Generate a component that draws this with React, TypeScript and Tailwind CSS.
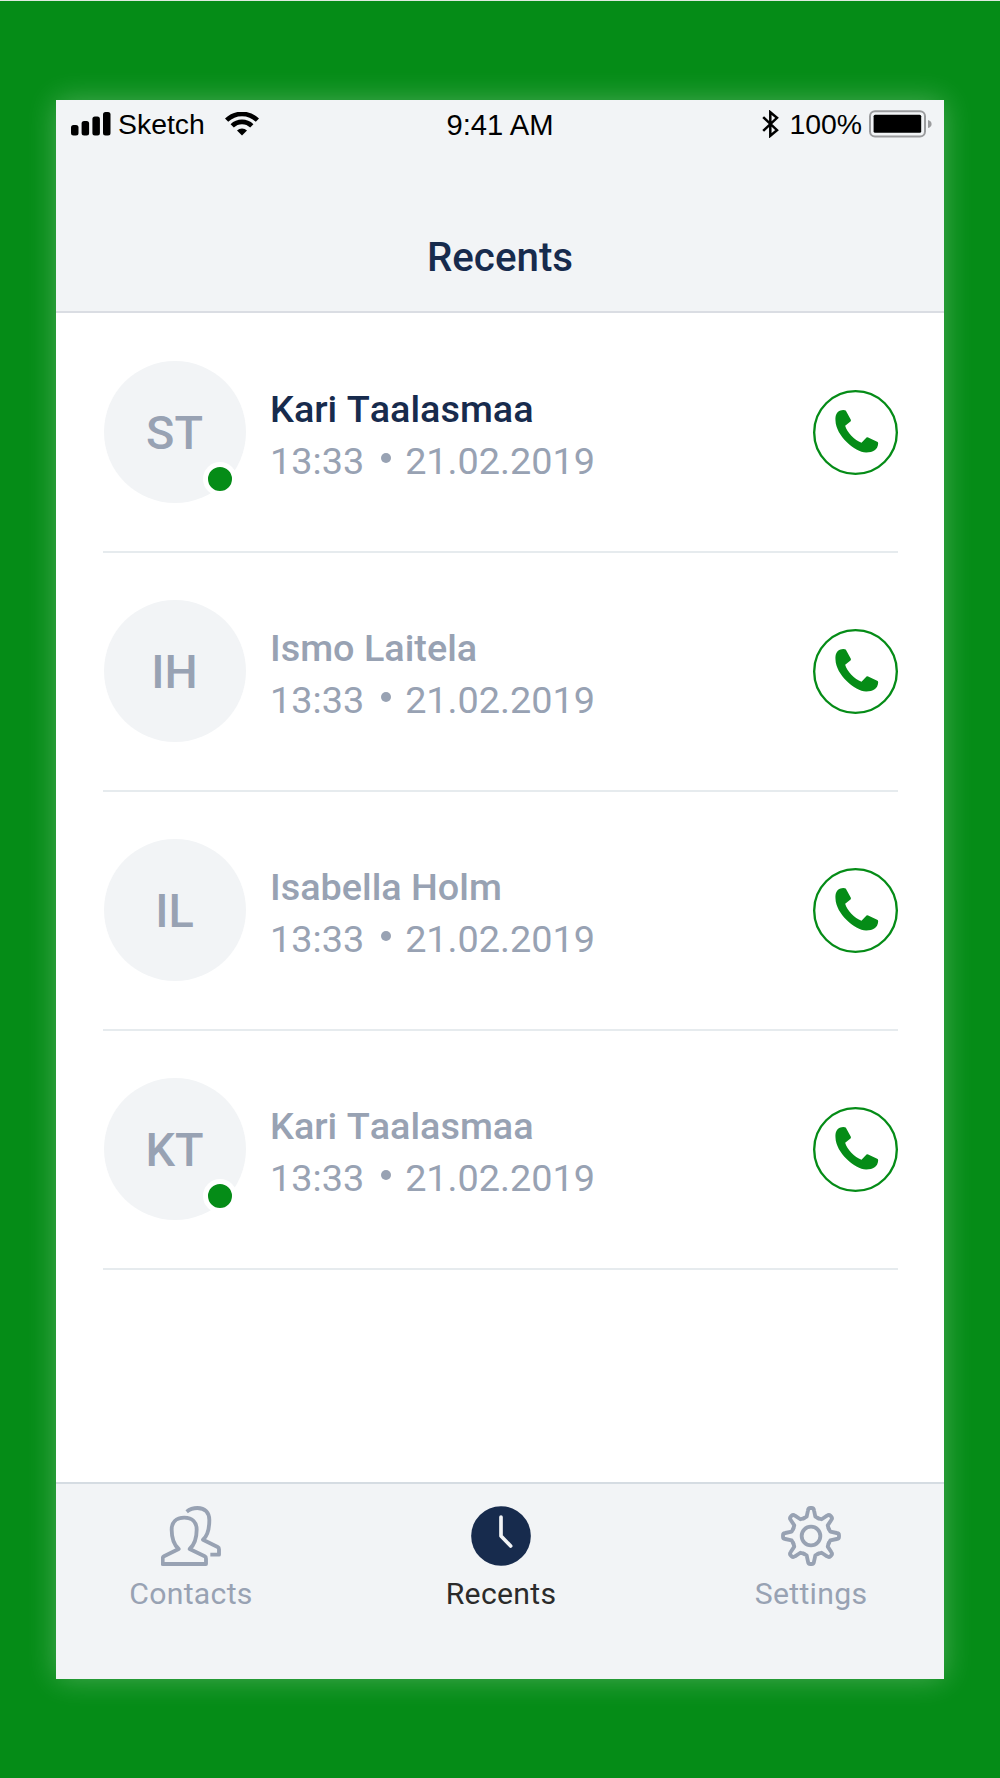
import {FC} from 'react';

interface Call { initials: string; name: string; time: string; date: string; online?: boolean; unread?: boolean }

const calls: Call[] = [
  {initials: 'ST', name: 'Kari Taalasmaa', time: '13:33', date: '21.02.2019', online: true, unread: true},
  {initials: 'IH', name: 'Ismo Laitela', time: '13:33', date: '21.02.2019'},
  {initials: 'IL', name: 'Isabella Holm', time: '13:33', date: '21.02.2019'},
  {initials: 'KT', name: 'Kari Taalasmaa', time: '13:33', date: '21.02.2019', online: true},
];

const StatusBar: FC = () => (
  <div className="grid h-12 grid-cols-3 items-center pr-3 pl-[15px] font-['Liberation_Sans',sans-serif] text-[28.4px] leading-none text-black">
    <div className="flex items-center">
      <svg className="h-6 w-10 shrink-0" viewBox="0 0 40 24">
        <rect x="0" y="13" width="7.5" height="10.5" rx="2.5" />
        <rect x="10.6" y="9" width="7.5" height="14.5" rx="2.5" />
        <rect x="21.4" y="4.5" width="7.5" height="19" rx="2.5" />
        <rect x="32" y="0" width="7.5" height="23.5" rx="2.5" />
      </svg>
      <span className="ml-[7px]">Sketch</span>
      <svg className="ml-5 h-6 w-[34px] shrink-0" fill="none" stroke="#000" strokeWidth="4.6" viewBox="0 0 34 24">
        <path d="M1.6 8.2a22 22 0 0 1 30.8 0" />
        <path d="M7.2 13.9a14 14 0 0 1 19.6 0" />
        <path d="M17 23.6l-5-5.2a7.4 7.4 0 0 1 10 0z" fill="#000" stroke="none" />
      </svg>
    </div>
    <span className="pt-[3px] pr-[3px] text-center text-[29.2px]">9:41 AM</span>
    <div className="flex items-center justify-end">
      <svg className="h-7 w-[17px] shrink-0" fill="none" stroke="#000" strokeWidth="2.5" viewBox="0 0 17 28">
        <path d="M1.2 7.2L15 20.2L8.3 25.8V2.2L15 7.8L1.2 20.8" />
      </svg>
      <span className="ml-[10px]">100%</span>
      <svg className="ml-[7px] h-7 w-[63px] shrink-0" viewBox="0 0 63 28">
        <rect x="1" y="1.2" width="55" height="25.4" rx="5" fill="none" stroke="#9b9c9e" strokeWidth="2" />
        <rect x="4.6" y="4.8" width="47.6" height="18" rx="1.5" />
        <path d="M59 10q3.6 1 3.6 4t-3.6 4z" fill="#9b9c9e" />
      </svg>
    </div>
  </div>
);

const CallButton: FC = () => (
  <button className="shrink-0" type="button">
    <svg className="size-[85px]" viewBox="68.5 59.5 255 255">
      <circle cx="196" cy="187" r="124" fill="none" stroke="#058c17" strokeWidth="7" />
      <path d="M17 3Q22 1 30 2Q33 2 34 5L48 31Q49 34 47 36L31 49C36 68 59 93 80 100L95 84Q97 82 100 84L127 97Q130 98 130 102C129 120 115 129 94 129C60 129 3 78 2 34C1 16 6 7 17 3Z" fill="#058c17" transform="translate(134 118)" />
    </svg>
  </button>
);

const CallRow: FC<{call: Call}> = ({call}) => (
  <li className="flex h-[239px] items-center border-b-2 border-[#e6ebee]">
    <div className="relative -mt-[2px] ml-[1px] flex size-[142px] shrink-0 items-center justify-center rounded-full bg-[#f2f4f6] text-[46.8px] font-medium text-[#98a2b3]">
      <span className="mt-1 mr-px">{call.initials}</span>
      {call.online && <span className="absolute right-[9px] bottom-[7px] size-[34px] rounded-full border-[5px] border-white bg-[#058c17]" />}
    </div>
    <div className="mt-[5px] ml-6 grow leading-[52px]">
      <div className={`text-[37.8px] font-medium [font-kerning:none] ${call.unread ? 'text-[#172b4d]' : 'text-[#98a2b3]'}`}>{call.name}</div>
      <div className="flex text-[37.8px] text-[#98a2b3]">
        <span>{call.time}</span>
        <span className="mt-[18px] mr-[14px] ml-[17px] size-[10px] rounded-full bg-[#98a2b3]" />
        <span>{call.date}</span>
      </div>
    </div>
    <CallButton />
  </li>
);

const ContactsIcon: FC = () => (
  <svg className="size-[60px]" fill="none" stroke="#98a2b3" strokeLinejoin="round" strokeWidth="11.5" viewBox="155 109 180 180">
    <path d="M225 144C199 144 187 160 187 180C187 205 195 226 208 238L164 260Q160 262 160 267V283H290V267Q290 262 286 260L241 238C254 226 262 205 262 180C262 160 250 144 225 144Z" />
    <path d="M232 126C242 118 252 115 264 115C288 115 300 130 300 151C300 176 295 198 281 210L325 232Q329 234 329 239V255H303" />
  </svg>
);

const RecentsIcon: FC = () => (
  <svg className="size-[60px]" viewBox="155 109 180 180">
    <circle cx="245" cy="199" r="89.5" fill="#172b4d" />
    <path d="M245 142V199L274 229" fill="none" stroke="#f2f4f6" strokeLinecap="round" strokeLinejoin="round" strokeWidth="11" />
  </svg>
);

const SettingsIcon: FC = () => (
  <svg className="size-[60px]" fill="none" stroke="#98a2b3" strokeLinejoin="round" strokeWidth="11.5" viewBox="-90 -90 180 180">
    <circle r="28" />
    {[0, 45, 90, 135, 180, 225, 270, 315].map(angle => (
      <path d="M-22 -53L-13 -58L-9 -77Q-8 -84 -2 -84H2Q8 -84 9 -77L13 -58L22 -53" key={angle} strokeLinecap="round" transform={`rotate(${angle})`} />
    ))}
  </svg>
);

const tabs = [
  {label: 'Contacts', Icon: ContactsIcon, active: false},
  {label: 'Recents', Icon: RecentsIcon, active: true},
  {label: 'Settings', Icon: SettingsIcon, active: false},
];

export default function App() {
  return (
    <div className="flex h-[1778px] w-[1000px] flex-col border-t border-[#dfeadf] bg-[#058c17] px-[56px] pt-[99px] font-['Roboto',sans-serif]">
      <div className="flex h-[1579px] flex-col bg-white shadow-[0_0_28px_rgba(255,255,255,0.27)]">
        {/* Header */}
        <header className="h-[213px] border-b-2 border-[#dadde3] bg-[#f2f4f6]">
          <StatusBar />
          <h1 className="mt-[85px] text-center text-[40.3px] leading-[50px] font-medium text-[#172b4d]">Recents</h1>
        </header>

        {/* Call history */}
        <ul className="grow pt-px pr-[46px] pl-[47px]">
          {calls.map((call, i) => <CallRow call={call} key={i} />)}
        </ul>

        {/* Tab bar */}
        <nav className="flex h-[197px] justify-between border-t-2 border-[#d5dce2] bg-[#f2f4f6] pt-[22px] pr-[43px] pl-[45px]">
          {tabs.map(({label, Icon, active}) => (
            <div className="flex w-[180px] flex-col items-center" key={label}>
              <Icon />
              <span className={`mt-2 text-[30.2px] leading-10 tracking-[0.3px] ${active ? 'text-[#2b2b2b]' : 'text-[#98a2b3]'}`}>{label}</span>
            </div>
          ))}
        </nav>
      </div>
    </div>
  );
}
